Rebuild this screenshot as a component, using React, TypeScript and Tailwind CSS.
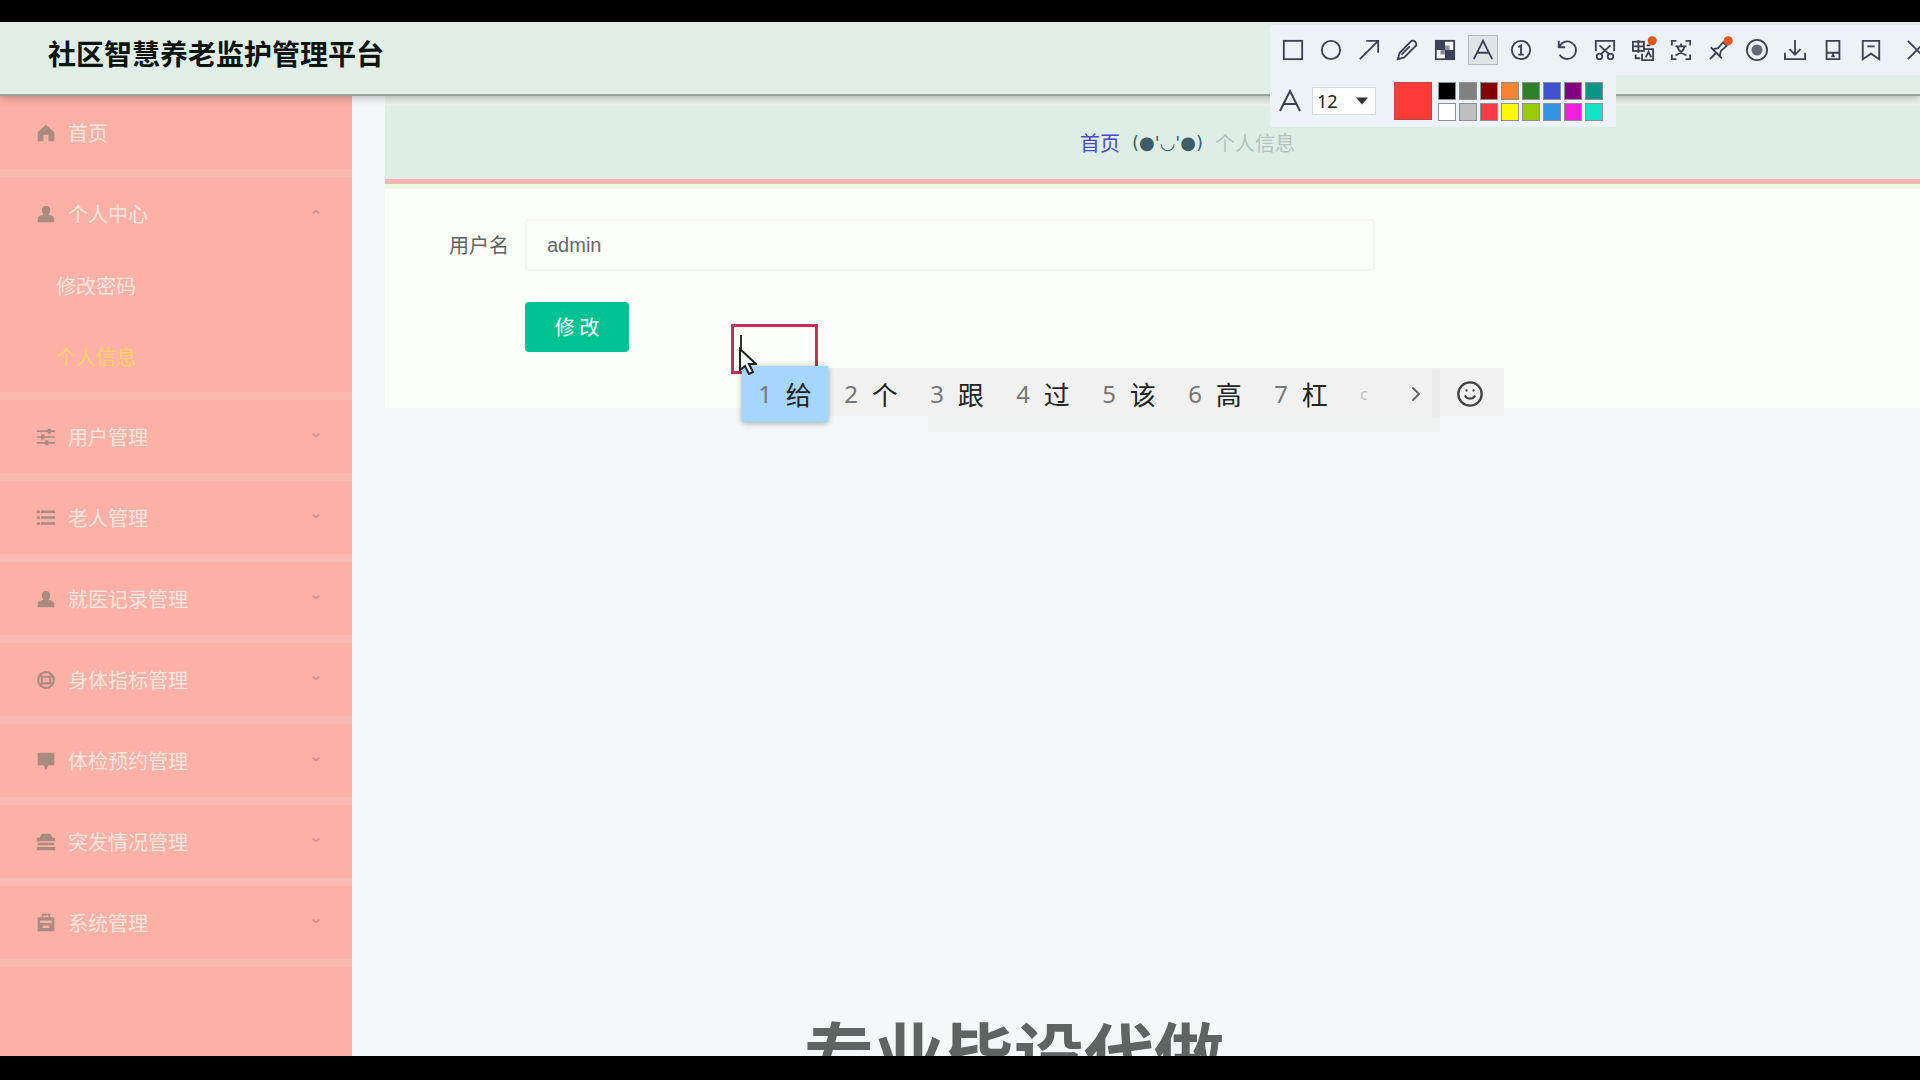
import { useState } from "react";
import type { ReactNode } from "react";
import { ChevronRight, Smile } from "lucide-react";

type MenuIcon = "home" | "user" | "sliders" | "list" | "ring" | "board" | "stack" | "case";

type MenuItem = {
    label: string;
    icon: MenuIcon;
    children?: string[];
};

const menu: MenuItem[] = [
    { label: "个人中心", icon: "user", children: ["修改密码", "个人信息"] },
    { label: "用户管理", icon: "sliders" },
    { label: "老人管理", icon: "list" },
    { label: "就医记录管理", icon: "user" },
    { label: "身体指标管理", icon: "ring" },
    { label: "体检预约管理", icon: "board" },
    { label: "突发情况管理", icon: "stack" },
    { label: "系统管理", icon: "case" },
];

const candidates = ["给", "个", "跟", "过", "该", "高", "杠"];

const swatches = [
    "bg-[#000000]", "bg-[#808080]", "bg-[#800000]", "bg-[#f78433]", "bg-[#2f8128]", "bg-[#3f50d0]", "bg-[#82007f]", "bg-[#099684]",
    "bg-[#ffffff]", "bg-[#c0c0c0]", "bg-[#fb3a48]", "bg-[#fff900]", "bg-[#9acb00]", "bg-[#3494e4]", "bg-[#f01fe0]", "bg-[#12e4c6]",
];

const menuGlyphs: Record<MenuIcon, ReactNode> = {
    home: <path d="M12 2 2 11v11h7v-8h6v8h7V11z" />,
    user: <path d="M12 2a5 5 0 0 1 5 5c0 3-1 5-2 6 4 1 7 2 7 5v4H2v-4c0-3 3-4 7-5-1-1-2-3-2-6a5 5 0 0 1 5-5z" />,
    sliders: <path d="M1 4h13V2h4v2h5v2h-5v2h-4V6H1zM1 11h5V9h4v2h13v2H10v2H6v-2H1zM1 18h10v-2h4v2h8v2h-8v2h-4v-2H1z" />,
    list: <path d="M1 3h4v3H1zM6 3h17v3H6zM1 10h4v3H1zM6 10h17v3H6zM1 17h4v3H1zM6 17h17v3H6z" />,
    ring: (
        <g fill="none" stroke="currentColor" strokeWidth="2.5">
            <circle cx="12" cy="12" r="9.5" />
            <rect x="7" y="8" width="10" height="8" rx="2" />
            <path d="M4 5l4 4M20 5l-4 4M4 19l4-4M20 19l-4-4" />
        </g>
    ),
    board: <path d="M2 2h20v15h-7l-3 6-3-6H2z" />,
    stack: <path d="M7 2h10l3 5h3v4H1V7h3zM2 13h20v3H2zM1 18h22v4H1z" />,
    case: <path fillRule="evenodd" d="M7 1h10v4h5v17H2V5h5zM9 3v2h6V3zM5 9v3h14V9zM8 15v3h8v-3z" />,
};

function MenuGlyph({ name }: { name: MenuIcon }) {
    return (
        <svg viewBox="0 0 24 24" className="size-5 shrink-0 text-[#a98c7f]" fill="currentColor" aria-hidden="true">
            {menuGlyphs[name]}
        </svg>
    );
}

type Tool = { name: string; glyph: ReactNode; active?: boolean; divider?: boolean };

const tools: Tool[] = [
    { name: "rectangle", glyph: <rect x="2" y="2" width="20" height="20" /> },
    { name: "ellipse", glyph: <circle cx="12" cy="12" r="10" /> },
    { name: "arrow", glyph: <path d="M2 22 22 2M9 2h13v13" /> },
    { name: "pencil", glyph: <path d="M2 22l2-7L17 2c3-1 6 2 5 5L9 20zM6 17l9-9" /> },
    {
        name: "mosaic",
        glyph: (
            <>
                <rect x="2" y="2" width="20" height="20" fill="#ffffff" />
                <path d="M2 2h10v10H2zM12 12h10v10H12z" fill="#3c4255" stroke="none" />
                <path d="M12 7h5v5h-5zM7 12h5v5H7z" fill="#8a8fa0" stroke="none" />
            </>
        ),
    },
    { name: "text", glyph: <path d="M2 22 12 2l10 20M6 15h12" />, active: true },
    { name: "number", glyph: <><circle cx="12" cy="12" r="10" /><path d="M9 9l3-2v10M9 17h6" /></> },
    { name: "undo", glyph: <path d="M3 2v7h7M3 9c3-6 9-8 14-5 7 4 6 14-1 17-5 2-10 0-12-4" />, divider: true },
    { name: "cut", glyph: <><path d="M2 13V2h20v11M6 7l11 10M18 7 7 17" /><circle cx="6" cy="19" r="3" /><circle cx="18" cy="19" r="3" /></> },
    {
        name: "translate",
        glyph: (
            <>
                <rect x="1" y="3" width="12" height="10" />
                <path d="M7 1v14M1 8h12M4 17v4h5M16 7h4" />
                <path d="M13 11h10v12H11v-7M15 20l3-6 3 6" />
                <circle cx="22" cy="2" r="5" fill="#e8551a" stroke="none" />
            </>
        ),
    },
    { name: "ocr", glyph: <path d="M2 7V2h5M17 2h5v5M22 17v5h-5M7 22H2v-5M6 8h12M12 5v3M16 8c-1 4-5 8-10 10M8 8c1 4 5 8 10 10" /> },
    {
        name: "pin",
        glyph: (
            <>
                <path d="M2 22l7-7M3 9l12 12M6 11l5-1 6-7M13 18l1-5 7-6M16 3l5 5" />
                <circle cx="22" cy="2" r="5" fill="#e8551a" stroke="none" />
            </>
        ),
    },
    { name: "record", glyph: <><circle cx="12" cy="12" r="11" /><circle cx="12" cy="12" r="6" fill="#666a78" stroke="none" /></> },
    { name: "save", glyph: <path d="M12 1v16M6 11l6 6 6-6M1 15v7h22v-7" /> },
    { name: "phone", glyph: <path d="M5 2h14v20H5zM5 15h14M12 15v4M10 19h4" /> },
    { name: "bookmark", glyph: <path d="M3 2h18v20l-9-6-9 6zM8 8h8" /> },
    { name: "close", glyph: <path d="M2 2l20 20M22 2 2 22" />, divider: true },
];

function Sidebar() {
    const [current, setCurrent] = useState("个人信息");
    return (
        <nav className="w-[352px] shrink-0 bg-[#fdb1a6] text-xl leading-6 text-[#ffe4dc]">
            <a href="#home" className="flex h-[73px] items-center gap-3 pl-9">
                <MenuGlyph name="home" />
                首页
            </a>
            {menu.map((item) => (
                <div key={item.label} className="border-t-8 border-[#f8bbb0] last:border-b-8">
                    <button type="button" className="flex h-[73px] w-full items-center gap-3 pr-8 pl-9 text-left">
                        <MenuGlyph name={item.icon} />
                        <span className="flex-1">{item.label}</span>
                        <svg viewBox="0 0 12 6" className="mb-1 h-1 w-2" fill="none" stroke="#d8948b" strokeWidth="3" aria-hidden="true">
                            <path d={item.children ? "M1 5l5-4 5 4" : "M1 1l5 4 5-4"} />
                        </svg>
                    </button>
                    {item.children?.map((child) => (
                        <button
                            key={child}
                            type="button"
                            onClick={() => setCurrent(child)}
                            className={`flex h-[71px] w-full items-center pl-14 text-left ${current === child ? "text-[#fbd063]" : ""}`}
                        >
                            {child}
                        </button>
                    ))}
                </div>
            ))}
        </nav>
    );
}

function CaptureToolbar() {
    return (
        <div className="absolute top-[3px] left-[1270px] z-20">
            <div className="flex h-[50px] w-max items-center gap-2 bg-[#edf2f6] pl-2">
                {tools.map((t) => (
                    <button
                        key={t.name}
                        type="button"
                        aria-label={t.name}
                        className={`flex size-[30px] items-center justify-center ${t.active ? "border border-[#b4b9bd] bg-[#dfe4e6]" : ""} ${t.divider ? "ml-2" : ""}`}
                    >
                        <svg viewBox="0 0 24 24" className="size-[22px] overflow-visible" fill="none" stroke="#3c4255" strokeWidth="2">
                            {t.glyph}
                        </svg>
                    </button>
                ))}
            </div>
            <div className="flex h-[52px] w-[346px] items-center bg-[#edf2f6] pl-2">
                <svg viewBox="0 0 24 24" className="size-6" fill="none" stroke="#3c4255" strokeWidth="2" aria-hidden="true">
                    <path d="M2 22 12 2l10 20M6 15h12" />
                </svg>
                <div className="relative ml-2.5">
                    <select
                        aria-label="字号"
                        defaultValue="12"
                        className="h-7 w-16 appearance-none border border-[#d5dade] bg-white pl-1 font-['Noto_Sans'] text-lg leading-6 text-[#222]"
                    >
                        <option>12</option>
                        <option>14</option>
                    </select>
                    <svg viewBox="0 0 12 7" className="pointer-events-none absolute top-2.5 right-2 h-2 w-3" fill="#333" aria-hidden="true">
                        <path d="M0 0h12L6 7z" />
                    </svg>
                </div>
                <div className="ml-[18px] size-[38px] border border-[#c04848] bg-[#ff3b38]" />
                <div className="ml-1.5 grid grid-cols-8 gap-[3px]">
                    {swatches.map((color) => (
                        <button key={color} type="button" aria-label="颜色" className={`size-[18px] border border-[#8d9194] ${color}`} />
                    ))}
                </div>
            </div>
        </div>
    );
}

function CandidateBar() {
    return (
        <div className="absolute top-[366px] left-[742px] z-20 flex text-[26px] leading-8 text-[#222]">
            <div className="absolute inset-x-0 top-0.5 h-12 bg-[#f1f1f1]" />
            <div className="absolute top-[50px] right-16 left-[186px] h-4 bg-[#eef2f1]" />
            {candidates.map((word, i) => (
                <div
                    key={word}
                    className={`relative flex h-14 w-[86px] items-center justify-center gap-3.5 ${i === 0 ? "bg-[#a5d6fd] shadow-[0_1px_6px_rgba(0,0,0,0.35)]" : ""}`}
                >
                    <span className="font-['Noto_Sans'] text-2xl text-[#777]">{i + 1}</span>
                    {word}
                </div>
            ))}
            <div className="relative flex h-14 w-40 items-center">
                <span className="ml-4 font-['Noto_Sans'] text-base text-[#c4c4c4]">c</span>
                <ChevronRight className="ml-9 size-6 text-[#666]" strokeWidth={2} />
                <span className="ml-1 h-12 w-2 bg-[#ebebeb]" />
                <Smile className="ml-4 size-7 shrink-0 text-[#444]" strokeWidth={2} />
            </div>
        </div>
    );
}

export default function App() {
    const [name, setName] = useState("admin");

    return (
        <div className="flex h-screen flex-col overflow-hidden bg-black font-['Noto_Sans_CJK_SC',sans-serif]">
            <div className="h-[22px] shrink-0" />
            <div className="relative flex min-h-0 flex-1 flex-col overflow-hidden bg-[#f4f8f8]">
                {/* Header */}
                <header className="relative z-10 flex h-[74px] shrink-0 items-center border-b-2 border-[#94a39e] bg-[#e1eee7] pb-2.5 pl-12 shadow-[0_2px_8px_rgba(0,0,0,0.25)]">
                    <h1 className="text-[28px] leading-9 font-bold text-[#0b1410]">社区智慧养老监护管理平台</h1>
                </header>

                <div className="flex min-h-0 flex-1">
                    <Sidebar />
                    {/* The content column runs past the right edge of the window */}
                    <main className="-mr-[70px] ml-[33px] flex-1">
                        <div className="relative flex h-[88px] items-center justify-center gap-3 border-t-[10px] border-b-[5px] border-t-[#edefed] border-b-[#f7b7b3] bg-[#deeee7] text-xl leading-6 shadow-[0_5px_0_#eef8e6]">
                            <a href="#home" className="text-[#4a48cf]">首页</a>
                            <span className="font-['DejaVu_Sans'] text-lg leading-6 text-[#3d5e66]">(●'◡'●)</span>
                            <span className="text-[#b4c4be]">个人信息</span>
                        </div>
                        <form className="h-[224px] bg-[#fbfffa] pt-[35px] pl-16" onSubmit={(e) => e.preventDefault()}>
                            <div className="flex h-[52px] items-center gap-4">
                                <label htmlFor="username" className="text-xl leading-6 text-[#606266]">用户名</label>
                                <input
                                    id="username"
                                    value={name}
                                    onChange={(e) => setName(e.target.value)}
                                    className="h-full w-[850px] rounded border-2 border-[#f4f8f3] bg-transparent px-5 font-['Liberation_Sans'] text-xl text-[#66696b] outline-none"
                                />
                            </div>
                            <button type="submit" className="mt-[31px] ml-[76px] block h-[50px] w-[104px] rounded bg-[#00c292] text-xl leading-6 text-white">
                                修 改
                            </button>
                        </form>
                    </main>
                </div>

                {/* Watermark, cut by the bottom edge */}
                <p className="absolute top-[988px] left-[804px] text-[70px] leading-[84px] font-bold whitespace-nowrap text-[#5d6462]">专业毕设代做</p>

                <CaptureToolbar />
            </div>
            <div className="h-6 shrink-0" />

            {/* Text annotation being typed */}
            <div className="absolute top-[324px] left-[731px] z-10 h-[50px] w-[87px] border-[3px] border-[#c92d58]">
                <span className="mt-2 ml-1.5 block h-5 w-0.5 bg-[#333]" />
            </div>
            <CandidateBar />
            <svg viewBox="0 0 18 28" className="absolute top-[347px] left-[739px] z-30 h-7 w-[18px]" fill="#fff" stroke="#222" strokeWidth="2" aria-hidden="true">
                <path d="M1 2v21l5-4 4 8 4-2-4-8h7z" />
            </svg>
        </div>
    );
}
